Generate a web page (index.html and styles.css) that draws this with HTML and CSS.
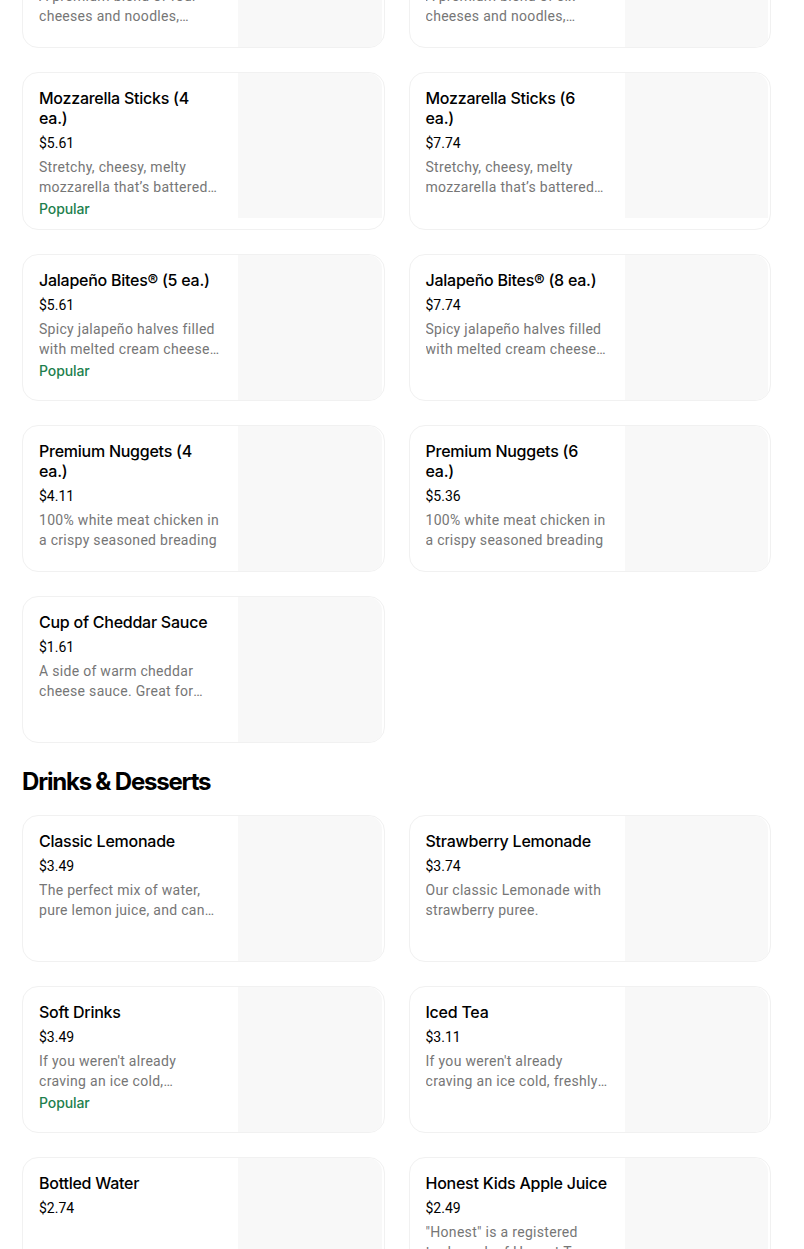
FILE: index.html
```html
<!DOCTYPE html>
<html lang="en">
<head>
<meta charset="utf-8">
<title>Menu</title>
<link rel="stylesheet" href="styles.css">
</head>
<body>
<main class="menu">
  <section class="section">
    <div class="grid">
      <div class="card">
        <div class="info">
          <div class="title">4 Cheese Mac &amp; Cheese (Regular)</div>
          <div class="price">$6.23</div>
          <div class="desc">A premium blend of four cheeses and noodles, baked to perfection</div>
        </div>
        <div class="thumb"></div>
      </div>
      <div class="card">
        <div class="info">
          <div class="title">6 Cheese Mac &amp; Cheese (Large)</div>
          <div class="price">$8.11</div>
          <div class="desc">A premium blend of six cheeses and noodles, baked to perfection</div>
        </div>
        <div class="thumb"></div>
      </div>
      <div class="card">
        <div class="info">
          <div class="title">Mozzarella Sticks (4 ea.)</div>
          <div class="price">$5.61</div>
          <div class="desc">Stretchy, cheesy, melty mozzarella that’s battered and fried golden</div>
          <div class="popular">Popular</div>
        </div>
        <div class="thumb"></div>
      </div>
      <div class="card">
        <div class="info">
          <div class="title">Mozzarella Sticks (6 ea.)</div>
          <div class="price">$7.74</div>
          <div class="desc">Stretchy, cheesy, melty mozzarella that’s battered and fried golden</div>
        </div>
        <div class="thumb"></div>
      </div>
      <div class="card">
        <div class="info">
          <div class="title">Jalapeño Bites® (5 ea.)</div>
          <div class="price">$5.61</div>
          <div class="desc">Spicy jalapeño halves filled with melted cream cheese, breaded and fried</div>
          <div class="popular">Popular</div>
        </div>
        <div class="thumb"></div>
      </div>
      <div class="card">
        <div class="info">
          <div class="title">Jalapeño Bites® (8 ea.)</div>
          <div class="price">$7.74</div>
          <div class="desc">Spicy jalapeño halves filled with melted cream cheese, breaded and fried</div>
        </div>
        <div class="thumb"></div>
      </div>
      <div class="card">
        <div class="info">
          <div class="title">Premium Nuggets (4 ea.)</div>
          <div class="price">$4.11</div>
          <div class="desc">100% white meat chicken in a crispy seasoned breading</div>
        </div>
        <div class="thumb"></div>
      </div>
      <div class="card">
        <div class="info">
          <div class="title">Premium Nuggets (6 ea.)</div>
          <div class="price">$5.36</div>
          <div class="desc">100% white meat chicken in a crispy seasoned breading</div>
        </div>
        <div class="thumb"></div>
      </div>
      <div class="card">
        <div class="info">
          <div class="title">Cup of Cheddar Sauce</div>
          <div class="price">$1.61</div>
          <div class="desc">A side of warm cheddar cheese sauce. Great for dipping anything</div>
        </div>
        <div class="thumb"></div>
      </div>
    </div>
  </section>

  <section class="section">
    <h2 class="heading">Drinks &amp; Desserts</h2>
    <div class="grid">
      <div class="card">
        <div class="info">
          <div class="title">Classic Lemonade</div>
          <div class="price">$3.49</div>
          <div class="desc">The perfect mix of water, pure lemon juice, and cane sugar</div>
        </div>
        <div class="thumb"></div>
      </div>
      <div class="card">
        <div class="info">
          <div class="title">Strawberry Lemonade</div>
          <div class="price">$3.74</div>
          <div class="desc">Our classic Lemonade with strawberry puree.</div>
        </div>
        <div class="thumb"></div>
      </div>
      <div class="card">
        <div class="info">
          <div class="title">Soft Drinks</div>
          <div class="price">$3.49</div>
          <div class="desc">If you weren't already craving an ice cold, refreshing fountain drink</div>
          <div class="popular">Popular</div>
        </div>
        <div class="thumb"></div>
      </div>
      <div class="card">
        <div class="info">
          <div class="title">Iced Tea</div>
          <div class="price">$3.11</div>
          <div class="desc">If you weren't already craving an ice cold, freshly brewed tea</div>
        </div>
        <div class="thumb"></div>
      </div>
      <div class="card">
        <div class="info">
          <div class="title">Bottled Water</div>
          <div class="price">$2.74</div>
        </div>
        <div class="thumb"></div>
      </div>
      <div class="card">
        <div class="info">
          <div class="title">Honest Kids Apple Juice</div>
          <div class="price">$2.49</div>
          <div class="desc">"Honest" is a registered trademark of Honest Tea, Inc.</div>
        </div>
        <div class="thumb"></div>
      </div>
    </div>
  </section>
</main>
</body>
</html>
```

FILE: styles.css
```css
* { box-sizing: border-box; }
html, body { margin: 0; padding: 0; background: #ffffff; }
body {
  font-family: Roboto, "Liberation Sans", sans-serif;
  color: #000000;
  overflow: hidden;
}
.menu {
  width: 749px;
  margin: -99px 0 0 22px;
}
.grid {
  display: grid;
  grid-template-columns: 1fr 1fr;
  column-gap: 24px;
  row-gap: 24px;
  align-items: stretch;
}
.card {
  display: flex;
  align-items: flex-start;
  min-height: 147px;
  border: 1px solid #f1f1f1;
  border-radius: 16px;
  overflow: hidden;
  background: #ffffff;
}
.info {
  width: 215px;
  flex: none;
  padding: 15px 17.5px 10px 16px;
  display: flex;
  flex-direction: column;
}
.title {
  font-family: Inter, "Liberation Sans", sans-serif;
  font-size: 16px;
  font-weight: 500;
  line-height: 20px;
  letter-spacing: -0.25px;
  color: #000;
}
.price {
  margin-top: 5px;
  font-size: 14px;
  line-height: 20px;
  color: #000;
}
.desc {
  margin-top: 4px;
  font-size: 14px;
  line-height: 20px;
  letter-spacing: 0.3px;
  color: #767676;
  display: -webkit-box;
  -webkit-line-clamp: 2;
  -webkit-box-orient: vertical;
  overflow: hidden;
}
.popular {
  margin-top: 2px;
  font-family: Inter, "Liberation Sans", sans-serif;
  font-size: 14px;
  line-height: 20px;
  font-weight: 500;
  letter-spacing: -0.1px;
  color: #1e7f4e;
}
.thumb {
  flex: 1;
  height: 145px;
  background: #f8f8f8;
  border-radius: 0 14px 0 0;
  margin-right: 2px;
}
.heading {
  margin: 23px 0 17px 0;
  font-family: Inter, "Liberation Sans", sans-serif;
  font-size: 24px;
  line-height: 32px;
  font-weight: 700;
  letter-spacing: -1.2px;
}
```
